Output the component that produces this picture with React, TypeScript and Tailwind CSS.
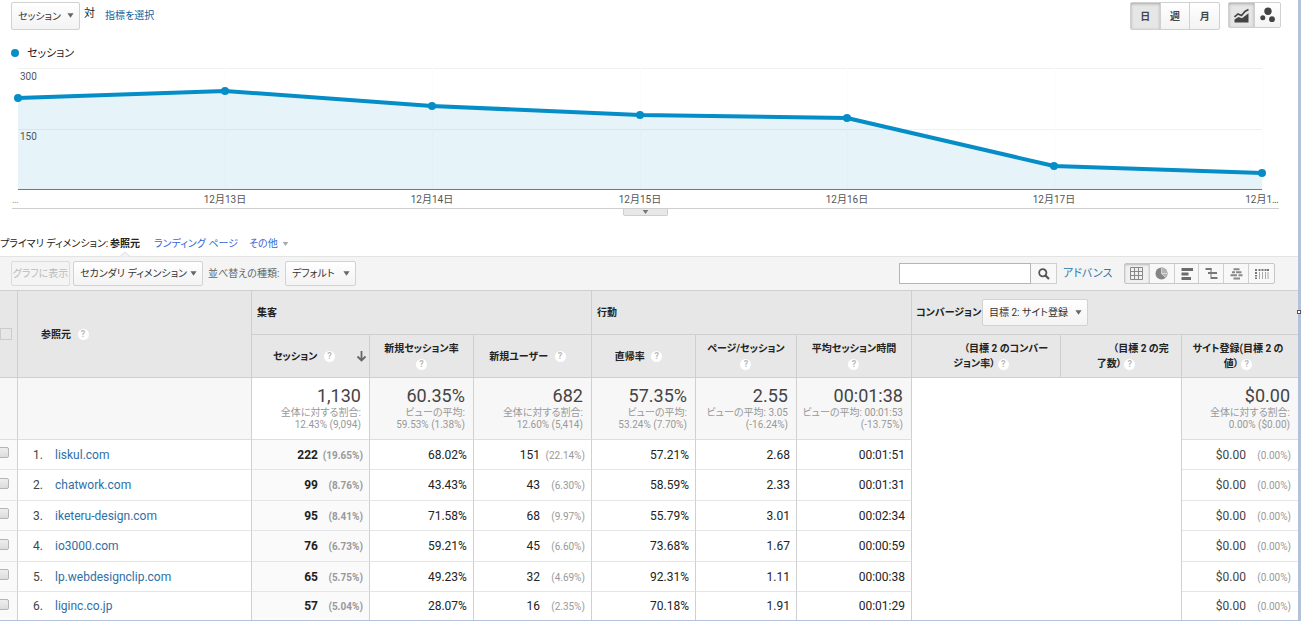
import type { ReactNode } from "react";

const points: [number, number][] = [
  [18, 38],
  [225, 31],
  [432, 46],
  [640, 55],
  [847, 58],
  [1054, 106],
  [1262, 113],
];

const dayLabels: [number, string][] = [
  [225, "12月13日"],
  [432, "12月14日"],
  [640, "12月15日"],
  [847, "12月16日"],
  [1054, "12月17日"],
  [1262, "12月1…"],
];

const rows = [
  ["liskul.com", "222", "(19.65%)", "68.02%", "151", "(22.14%)", "57.21%", "2.68", "00:01:51"],
  ["chatwork.com", "99", "(8.76%)", "43.43%", "43", "(6.30%)", "58.59%", "2.33", "00:01:31"],
  ["iketeru-design.com", "95", "(8.41%)", "71.58%", "68", "(9.97%)", "55.79%", "3.01", "00:02:34"],
  ["io3000.com", "76", "(6.73%)", "59.21%", "45", "(6.60%)", "73.68%", "1.67", "00:00:59"],
  ["lp.webdesignclip.com", "65", "(5.75%)", "49.23%", "32", "(4.69%)", "92.31%", "1.11", "00:00:38"],
  ["liginc.co.jp", "57", "(5.04%)", "28.07%", "16", "(2.35%)", "70.18%", "1.91", "00:01:29"],
];

function Caret({ className }: { className: string }) {
  return (
    <svg viewBox="0 0 8 5" className={className} aria-hidden="true">
      <path d="M0.5 0h7L4 5z" fill="currentColor" />
    </svg>
  );
}

function Picker({ label, text, className }: { label: string; text: string; className: string }) {
  return (
    <span className="relative inline-flex">
      <select
        aria-label={label}
        className={`appearance-none rounded-xs border border-[#d2d2d2] bg-linear-to-b from-white to-[#f3f3f3] font-normal text-[#333] ${className}`}
      >
        <option>{text}</option>
      </select>
      <Caret className="pointer-events-none absolute top-1/2 right-1.5 -mt-[3px] h-[5px] w-[7px] text-[#666]" />
    </span>
  );
}

function Help() {
  return (
    <span className="inline-block size-[11px] rounded-full bg-white text-center align-middle text-[9px] leading-[11px] font-bold text-[#bbb]">
      ?
    </span>
  );
}

function MetricHead({ children, last }: { children: ReactNode; last?: boolean }) {
  return (
    <th
      className={`border-b border-[#cfcfcf] p-0 text-center align-middle leading-[15px] font-bold ${last ? "" : "border-r"}`}
    >
      {children}
    </th>
  );
}

function Summary({
  value,
  lines,
  className,
}: {
  value: string;
  lines: [string, string];
  className: string;
}) {
  return (
    <td className={`border-b border-[#dedede] pt-2 pr-2 pl-0 text-right align-top whitespace-nowrap ${className}`}>
      <div className="text-lg leading-5 text-[#444]">{value}</div>
      <div className="pt-px leading-3 text-[#999]">{lines[0]}</div>
      <div className="leading-3 text-[#999]">{lines[1]}</div>
    </td>
  );
}

function Share({ children }: { children: ReactNode }) {
  return <span className="inline-block w-[45px] text-[10px] text-[#999]">{children}</span>;
}

function Chart() {
  const line = points.map((p) => p.join(",")).join(" ");
  return (
    <svg
      viewBox="0 0 1298 148"
      className="block h-auto w-full font-['Roboto','Noto_Sans_CJK_JP',sans-serif]"
      role="img"
      aria-label="セッション"
    >
      <path d="M18 8.5H1262M18 69.5H1262" stroke="#f0f0f0" />
      <path d="M225.5 8V129M432.5 8V129M640.5 8V129M847.5 8V129M1054.5 8V129M1262.5 8V129" stroke="#fbfbfb" />
      <polygon points={`18,129 ${line} 1262,129`} fill="#058dc7" fillOpacity="0.1" />
      <path d="M18 129.5H1262" stroke="#777" />
      <polyline points={line} fill="none" stroke="#058dc7" strokeWidth="4" strokeLinejoin="round" />
      {points.map(([x, y]) => (
        <circle key={x} cx={x} cy={y} r="4" fill="#058dc7" />
      ))}
      <g fontSize="10" fill="#555">
        <text x="20" y="20">300</text>
        <text x="20" y="80">150</text>
        <text x="12" y="143" fill="#999">…</text>
        {dayLabels.map(([x, text]) => (
          <text key={x} x={x} y="143" textAnchor="middle">
            {text}
          </text>
        ))}
      </g>
    </svg>
  );
}

const viewButton =
  "flex w-[25px] items-center justify-center border-r border-[#cfcfcf] last:border-r-0";

function ViewButtons() {
  return (
    <div className="flex h-[21px] w-[151px] rounded-xs border border-[#c6c6c6] bg-[#f8f8f8] text-[#888]">
      <button aria-label="表" className={`${viewButton} bg-[#f0f0f0] shadow-[inset_0_1px_2px_#bbb]`}>
        <svg width="13" height="13" viewBox="0 0 13 13" fill="none" stroke="currentColor">
          <path d="M0.500 0.500h12v12h-12zM0.500 4.500h12M0.500 8.500h12M4.500 0.500v12M8.500 0.500v12" />
        </svg>
      </button>
      <button aria-label="割合" className={viewButton}>
        <svg width="13" height="13" viewBox="0 0 13 13">
          <circle cx="6.500" cy="6.500" r="6" fill="#858585" />
          <path d="M6.500 6.500V0.500A6 6 0 0 1 10.700 10.700z" fill="#b4b4b4" />
          <path d="M6.500 1V6.500H12M6.500 6.500L10.500 10.500" fill="none" stroke="#e2e2e2" strokeWidth="0.800" />
        </svg>
      </button>
      <button aria-label="サマリー" className={viewButton}>
        <svg width="12" height="12" viewBox="0 0 12 12" fill="#6b6b6b">
          <path d="M0.500 0h11.500v3H0.500zM0.500 4.500h7v3h-7zM0.500 9h9.500v3H0.500z" />
        </svg>
      </button>
      <button aria-label="比較" className={viewButton}>
        <svg width="13" height="13" viewBox="0 0 13 13" fill="none" stroke="#777">
          <path d="M6 1V12" />
          <path d="M0.500 2h6M6 6h6M3 6h3M6 11h6.500" strokeWidth="2" />
        </svg>
      </button>
      <button aria-label="キーワード" className={viewButton}>
        <svg width="13" height="12" viewBox="0 0 13 12" fill="none" stroke="currentColor" strokeWidth="2">
          <path d="M3.500 1.200h6M2 4.200h3M6 4.200h5.500M0.500 7.200h6.500M8.500 7.200h4M3.500 10.400h6.500" />
        </svg>
      </button>
      <button aria-label="ピボット" className={viewButton}>
        <svg width="14" height="12" viewBox="0 0 14 12" fill="#777">
          <path d="M0 1h2v2H0zM3.500 1h2v2h-2zM6.500 1h2v2h-2zM9.500 1h2v2h-2zM12 1h2v2h-2zM0 4h2v2H0zM0 7h2v1.500H0zM0 9.500h2V11H0z" />
          <path d="M4 4h1v7H4zM7 4h1v7H7zM10 4h1v7h-1zM12.500 4h1v7h-1z" fill="#aaa" />
        </svg>
      </button>
    </div>
  );
}

export default function App() {
  const lineR = "border-r border-r-[#d0d0d0]";
  const cell = `border-b border-b-[#e5e5e5] py-0 pr-1.5 pl-0 text-right align-middle ${lineR}`;
  return (
    <main className="relative min-h-screen border-r-[3px] border-b border-[#b3c1d9] bg-white font-['Roboto','Noto_Sans_CJK_JP',sans-serif] text-[10px] leading-[15px] text-[#222] [font-feature-settings:'palt']">
      <div className="flex h-[38px] items-start pt-0.5 pr-[17px] pl-[11px]">
        <Picker label="指標" text="セッション" className="h-7 w-[69px] pl-1.5" />
        <span className="ml-1 pt-1 text-[11px]">対</span>
        <a href="#metric" className="ml-2.5 pt-1.5 text-[#15609b]">
          指標を選択
        </a>
        <div className="ml-auto flex h-7 w-[90px] rounded-xs border border-[#d0d0d0] bg-linear-to-b from-white to-[#f3f3f3] font-bold text-[#444]">
          <button className="flex-1 bg-[#e6e6e6] shadow-[inset_0_1px_3px_#aaa]">日</button>
          <button className="flex-1 border-x border-[#d0d0d0]">週</button>
          <button className="flex-1">月</button>
        </div>
        <div className="ml-2 flex h-[26px] w-[53px] rounded-xs border border-[#d0d0d0] bg-linear-to-b from-white to-[#f3f3f3] text-[#444]">
          <button
            aria-label="折れ線グラフ"
            className="flex flex-1 items-center justify-center border-r border-[#d0d0d0] bg-[#e6e6e6] shadow-[inset_0_1px_3px_#aaa]"
          >
            <svg width="15" height="15" viewBox="0 0 15 15">
              <path d="M0.500 14.500V11.500l4-2.500 3.500 1.200 6.500-5v9.300z" fill="currentColor" />
              <path d="M0.500 9l3.500-3 3.500 1.500 3.500-4 3.500-2" fill="none" stroke="currentColor" strokeWidth="1.600" />
            </svg>
          </button>
          <button aria-label="モーション グラフ" className="flex flex-1 items-center justify-center">
            <svg width="16" height="16" viewBox="0 0 16 16" fill="currentColor">
              <circle cx="8" cy="4.200" r="3.700" />
              <circle cx="2.800" cy="10.800" r="2.500" />
              <circle cx="12" cy="12.200" r="2.900" />
            </svg>
          </button>
        </div>
      </div>

      <div className="flex h-[22px] items-center gap-2 pt-2 pl-[11px] text-[11px]">
        <span className="size-2 rounded-full bg-[#058dc7]" />
        <span>セッション</span>
      </div>

      <Chart />
      <div className="mr-[19px] ml-3 flex h-7 items-start justify-center border-t border-[#cfcfcf]">
        <button
          aria-label="グラフを折りたたむ"
          className="flex h-[7px] w-[45px] items-center justify-center rounded-b-xs border border-t-0 border-[#cfcfcf] bg-[#e8e8e8]"
        >
          <Caret className="h-1 w-[7px] text-[#777]" />
        </button>
      </div>

      <nav className="flex h-5 items-start whitespace-nowrap">
        <span className="w-[110px]">プライマリ ディメンション:</span>
        <span className="relative mr-3.5 h-full font-bold">
          参照元
          <svg viewBox="0 0 10 6" className="absolute bottom-0 left-2.5 h-1.5 w-2.5 translate-y-px">
            <path d="M0 5.500L5 1l5 4.500" fill="#f4f4f4" stroke="#ddd" />
          </svg>
        </span>
        <a href="#landing" className="w-[95px] text-[#3367d6]">
          ランディング ページ
        </a>
        <a href="#other" className="flex items-center gap-1 text-[#3367d6]">
          その他 <Caret className="h-1 w-[7px] text-[#aaa]" />
        </a>
      </nav>

      <div className="flex h-[35px] items-center border-y border-t-[#e3e3e3] border-b-[#cfcfcf] bg-[#f4f4f4] pr-[23px] pl-[11px] whitespace-nowrap">
        <button disabled className="h-[25px] w-[59px] rounded-xs border border-[#dcdcdc] text-[#bbb]">
          グラフに表示
        </button>
        <span className="ml-[3px] flex">
          <Picker label="セカンダリ ディメンション" text="セカンダリ ディメンション" className="h-[25px] w-[130px] pl-1.5" />
        </span>
        <label htmlFor="sort-kind" className="ml-[5px] w-[77px] text-[#666]">
          並べ替えの種類:
        </label>
        <span className="relative inline-flex">
          <select
            id="sort-kind"
            className="h-[25px] w-[71px] appearance-none rounded-xs border border-[#d2d2d2] bg-linear-to-b from-white to-[#f3f3f3] pl-1.5 text-[#333]"
          >
            <option>デフォルト</option>
          </select>
          <Caret className="pointer-events-none absolute top-1/2 right-1.5 -mt-[3px] h-[5px] w-[7px] text-[#666]" />
        </span>
        <div className="ml-auto flex h-[21px]">
          <input aria-label="検索" className="w-[132px] border border-[#b5b5b5] bg-white px-1" />
          <button
            aria-label="検索する"
            className="flex w-[26px] items-center justify-center border border-l-0 border-[#cfcfcf] bg-[#f8f8f8] text-[#555]"
          >
            <svg width="12" height="12" viewBox="0 0 12 12" fill="none" stroke="currentColor">
              <circle cx="4.800" cy="4.800" r="3.600" strokeWidth="1.800" />
              <path d="M7.500 7.500L11 11" strokeWidth="2.200" />
            </svg>
          </button>
        </div>
        <a href="#advanced" className="ml-1.5 w-[61px] text-[11px] text-[#2a7ab0]">
          アドバンス
        </a>
        <ViewButtons />
      </div>

      <table className="w-full table-fixed border-separate border-spacing-0">
        <colgroup>
          <col className="w-[18px]" />
          <col />
          <col className="w-[118px]" />
          <col className="w-[104px]" />
          <col className="w-[118px]" />
          <col className="w-[104px]" />
          <col className="w-[101px]" />
          <col className="w-[115px]" />
          <col className="w-[149px]" />
          <col className="w-[121px]" />
          <col className="w-[116px]" />
        </colgroup>
        <thead className="bg-[#e7e7e7]">
          <tr className="h-11">
            <th rowSpan={2} className="border-r border-b border-[#cfcfcf] p-0 text-left align-middle">
              <input
                type="checkbox"
                aria-label="すべて選択"
                className="block size-3 appearance-none border border-[#ccc]"
              />
            </th>
            <th rowSpan={2} className="border-r border-b border-[#cfcfcf] py-0 pr-0 pl-[23px] text-left align-middle font-bold">
              参照元 <span className="ml-1"><Help /></span>
            </th>
            <th colSpan={3} className="border-r border-b border-[#cfcfcf] py-0 pr-0 pl-[5px] text-left align-middle font-bold">
              集客
            </th>
            <th colSpan={3} className="border-r border-b border-[#cfcfcf] py-0 pr-0 pl-[5px] text-left align-middle font-bold">
              行動
            </th>
            <th colSpan={3} className="border-b border-[#cfcfcf] py-0 pr-0 pl-1 text-left align-middle font-bold">
              <div className="flex items-center">
                <span className="w-[66px]">コンバージョン</span>
                <Picker label="コンバージョン" text="目標 2: サイト登録" className="h-[27px] w-[106px] pl-1.5" />
              </div>
            </th>
          </tr>
          <tr className="h-[43px]">
            <MetricHead>
              <div className="flex items-center">
                <span className="flex-1">
                  セッション <span className="ml-1"><Help /></span>
                </span>
                <svg width="11" height="12" viewBox="0 0 11 12" fill="none" stroke="#666" strokeWidth="1.800" className="mr-0.5">
                  <path d="M5.500 1v9.500M1.500 6.500l4 4 4-4" />
                </svg>
              </div>
            </MetricHead>
            <MetricHead>
              <div>新規セッション率</div>
              <div><Help /></div>
            </MetricHead>
            <MetricHead>
              <div className="pr-2.5">
                新規ユーザー <span className="ml-1"><Help /></span>
              </div>
            </MetricHead>
            <MetricHead>
              <div className="pr-2.5">
                直帰率 <span className="ml-1"><Help /></span>
              </div>
            </MetricHead>
            <MetricHead>
              <div>ページ/セッション</div>
              <div><Help /></div>
            </MetricHead>
            <MetricHead>
              <div>平均セッション時間</div>
              <div><Help /></div>
            </MetricHead>
            <MetricHead>
              <div className="pl-10">（目標 2 のコンバー</div>
              <div className="pr-2.5">ジョン率） <Help /></div>
            </MetricHead>
            <MetricHead>
              <div className="pl-10">（目標 2 の完</div>
              <div className="pr-2.5">了数） <Help /></div>
            </MetricHead>
            <MetricHead last>
              <div className="pr-1">サイト登録(目標 2 の</div>
              <div className="pr-1">値） <Help /></div>
            </MetricHead>
          </tr>
        </thead>
        <tbody>
          <tr className="h-[62px] bg-[#f7f7f7]">
            <td className={`border-b border-b-[#dedede] p-0 ${lineR}`} />
            <td className={`border-b border-b-[#dedede] p-0 ${lineR}`} />
            <Summary value="1,130" lines={["全体に対する割合:", "12.43% (9,094)"]} className="border-r border-r-[#d0d0d0] bg-white" />
            <Summary value="60.35%" lines={["ビューの平均:", "59.53% (1.38%)"]} className={lineR} />
            <Summary value="682" lines={["全体に対する割合:", "12.60% (5,414)"]} className={lineR} />
            <Summary value="57.35%" lines={["ビューの平均:", "53.24% (7.70%)"]} className={lineR} />
            <Summary value="2.55" lines={["ビューの平均: 3.05", "(-16.24%)"]} className={lineR} />
            <Summary value="00:01:38" lines={["ビューの平均: 00:01:53", "(-13.75%)"]} className={lineR} />
            <td rowSpan={7} colSpan={2} className={`bg-white p-0 ${lineR}`} />
            <Summary value="$0.00" lines={["全体に対する割合:", "0.00% ($0.00)"]} className="" />
          </tr>
          {rows.map((r, i) => (
            <tr key={r[0]} className="text-xs odd:h-[31px] even:h-[30px] last:h-[28px]! last:[&>td]:border-b-0">
              <td className={`border-b border-b-[#e5e5e5] bg-[#fafafa] pt-0 pr-0 pb-1 pl-0 align-middle ${lineR}`}>
                <input
                  type="checkbox"
                  aria-label={r[0]}
                  className="-ml-0.5 block size-[11px] appearance-none rounded-xs border border-[#b5b5b5] bg-linear-to-b from-[#eee] to-[#dcdcdc]"
                />
              </td>
              <td className={`border-b border-b-[#e5e5e5] py-0 pr-0 pl-[15px] align-middle ${lineR}`}>
                <span className="inline-block w-[22px] text-[#444]">{i + 1}.</span>
                <a href={`#${r[0]}`} className="text-[#2f6fa5]">
                  {r[0]}
                </a>
              </td>
              <td className={`bg-[#fafafa] font-bold ${cell}`}>
                {r[1]}
                <Share>{r[2]}</Share>
              </td>
              <td className={cell}>{r[3]}</td>
              <td className={cell}>
                {r[4]}
                <Share>{r[5]}</Share>
              </td>
              <td className={cell}>{r[6]}</td>
              <td className={cell}>{r[7]}</td>
              <td className={cell}>{r[8]}</td>
              <td className="border-b border-b-[#e5e5e5] py-0 pr-[7px] pl-0 text-right align-middle text-[#444]">
                $0.00
                <Share>{"(0.00%)"}</Share>
              </td>
            </tr>
          ))}
        </tbody>
      </table>
      <span className="absolute top-1/2 -right-[3px] size-1 border border-[#555] bg-white" />
    </main>
  );
}
